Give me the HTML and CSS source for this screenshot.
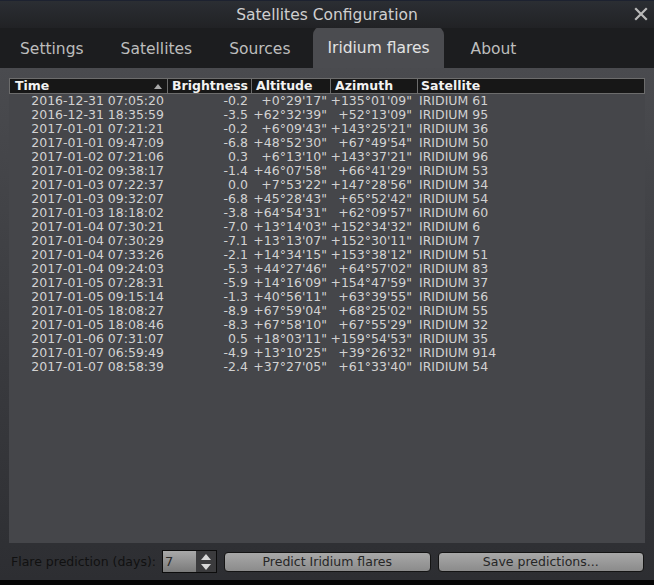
FILE: index.html
```html
<!DOCTYPE html>
<html>
<head>
<meta charset="utf-8">
<link rel="stylesheet" href="styles.css">
</head>
<body>
<div class="window">
  <div class="titlebar">
    <span class="title">Satellites Configuration</span>
    <svg class="close" width="14" height="14" viewBox="0 0 14 14"><path d="M2 2 L12 12 M12 2 L2 12" stroke="#b9b9b9" stroke-width="2.2" stroke-linecap="square"/></svg>
  </div>
  <div class="tabs">
    <div class="tab">Settings</div>
    <div class="tab">Satellites</div>
    <div class="tab">Sources</div>
    <div class="tab active">Iridium flares</div>
    <div class="tab about">About</div>
  </div>
  <div class="page">
    <div class="table">
      <div class="head">
        <div class="hc time">Time<svg class="sort" width="8" height="5" viewBox="0 0 8 5"><path d="M0 5 L4 0 L8 5 Z" fill="#a8a8a8"/></svg></div>
        <div class="hc">Brightness</div>
        <div class="hc">Altitude</div>
        <div class="hc">Azimuth</div>
        <div class="hc last">Satellite</div>
      </div>
      <div class="rows">
        <div class="row"><span>2016-12-31 07:05:20</span><span>-0.2</span><span>+0°29'17"</span><span>+135°01'09"</span><span class="sat">IRIDIUM 61</span></div>
        <div class="row"><span>2016-12-31 18:35:59</span><span>-3.5</span><span>+62°32'39"</span><span>+52°13'09"</span><span class="sat">IRIDIUM 95</span></div>
        <div class="row"><span>2017-01-01 07:21:21</span><span>-0.2</span><span>+6°09'43"</span><span>+143°25'21"</span><span class="sat">IRIDIUM 36</span></div>
        <div class="row"><span>2017-01-01 09:47:09</span><span>-6.8</span><span>+48°52'30"</span><span>+67°49'54"</span><span class="sat">IRIDIUM 50</span></div>
        <div class="row"><span>2017-01-02 07:21:06</span><span>0.3</span><span>+6°13'10"</span><span>+143°37'21"</span><span class="sat">IRIDIUM 96</span></div>
        <div class="row"><span>2017-01-02 09:38:17</span><span>-1.4</span><span>+46°07'58"</span><span>+66°41'29"</span><span class="sat">IRIDIUM 53</span></div>
        <div class="row"><span>2017-01-03 07:22:37</span><span>0.0</span><span>+7°53'22"</span><span>+147°28'56"</span><span class="sat">IRIDIUM 34</span></div>
        <div class="row"><span>2017-01-03 09:32:07</span><span>-6.8</span><span>+45°28'43"</span><span>+65°52'42"</span><span class="sat">IRIDIUM 54</span></div>
        <div class="row"><span>2017-01-03 18:18:02</span><span>-3.8</span><span>+64°54'31"</span><span>+62°09'57"</span><span class="sat">IRIDIUM 60</span></div>
        <div class="row"><span>2017-01-04 07:30:21</span><span>-7.0</span><span>+13°14'03"</span><span>+152°34'32"</span><span class="sat">IRIDIUM 6</span></div>
        <div class="row"><span>2017-01-04 07:30:29</span><span>-7.1</span><span>+13°13'07"</span><span>+152°30'11"</span><span class="sat">IRIDIUM 7</span></div>
        <div class="row"><span>2017-01-04 07:33:26</span><span>-2.1</span><span>+14°34'15"</span><span>+153°38'12"</span><span class="sat">IRIDIUM 51</span></div>
        <div class="row"><span>2017-01-04 09:24:03</span><span>-5.3</span><span>+44°27'46"</span><span>+64°57'02"</span><span class="sat">IRIDIUM 83</span></div>
        <div class="row"><span>2017-01-05 07:28:31</span><span>-5.9</span><span>+14°16'09"</span><span>+154°47'59"</span><span class="sat">IRIDIUM 37</span></div>
        <div class="row"><span>2017-01-05 09:15:14</span><span>-1.3</span><span>+40°56'11"</span><span>+63°39'55"</span><span class="sat">IRIDIUM 56</span></div>
        <div class="row"><span>2017-01-05 18:08:27</span><span>-8.9</span><span>+67°59'04"</span><span>+68°25'02"</span><span class="sat">IRIDIUM 55</span></div>
        <div class="row"><span>2017-01-05 18:08:46</span><span>-8.3</span><span>+67°58'10"</span><span>+67°55'29"</span><span class="sat">IRIDIUM 32</span></div>
        <div class="row"><span>2017-01-06 07:31:07</span><span>0.5</span><span>+18°03'11"</span><span>+159°54'53"</span><span class="sat">IRIDIUM 35</span></div>
        <div class="row"><span>2017-01-07 06:59:49</span><span>-4.9</span><span>+13°10'25"</span><span>+39°26'32"</span><span class="sat">IRIDIUM 914</span></div>
        <div class="row"><span>2017-01-07 08:58:39</span><span>-2.4</span><span>+37°27'05"</span><span>+61°33'40"</span><span class="sat">IRIDIUM 54</span></div>
      </div>
    </div>
    <div class="controls">
      <span class="label">Flare prediction (days):</span>
      <div class="spin">
        <div class="spin-field">7</div>
        <div class="spin-btns">
          <svg width="10" height="6" viewBox="0 0 10 6"><path d="M0 6 L5 0 L10 6 Z" fill="#d8d8d8"/></svg>
          <svg width="10" height="6" viewBox="0 0 10 6"><path d="M0 0 L5 6 L10 0 Z" fill="#d8d8d8"/></svg>
        </div>
      </div>
      <div class="btn">Predict Iridium flares</div>
      <div class="btn">Save predictions...</div>
    </div>
  </div>
  <div class="bottom"></div>
</div>
</body>
</html>
```
FILE: styles.css
```css
* { box-sizing: border-box; }
html, body { margin: 0; padding: 0; background: #000; }
body { font-family: "DejaVu Sans", sans-serif; }
.window { width: 654px; height: 585px; display: flex; flex-direction: column; overflow: hidden; }
.titlebar {
  height: 28px; position: relative;
  background: linear-gradient(#2b2e33, #212225);
  border-top: 1px solid #1d2230;
  display: flex; align-items: center; justify-content: center;
}
.title { color: #cfcfcf; font-size: 15.5px; }
.close { position: absolute; right: 6px; top: 6px; }
.tabs {
  height: 40px; background: #1c1d1f;
  display: flex; align-items: flex-end; padding-left: 6px; gap: 9px;
}
.tab {
  height: 40px; padding: 0 14px; display: flex; align-items: center;
  color: #bdbdbd; font-size: 15.5px; padding-top: 2px;
}
.tab.active {
  height: 42px; background: #4b4c50; border-radius: 9px 9px 0 0; color: #e2e2e2;
}
.tab.about { margin-left: 4px; }
.page {
  flex: 1; display: flex; flex-direction: column;
  background: linear-gradient(#4a4b4f, #2d2e32);
  padding: 10px 9px 0;
}
.table { height: 465px; background: #45464a; display: flex; flex-direction: column; }
.head {
  display: grid; grid-template-columns: 158px 84px 79px 87px 1fr;
  height: 16px; background: #171717; border: 1px solid #6c6c6c;
}
.hc {
  color: #f2f2f2; font-weight: bold; font-size: 12.5px; line-height: 14px;
  padding-left: 4px; border-right: 1px solid #6c6c6c; position: relative;
}
.hc.last { border-right: none; padding-left: 3px; }
.hc.time { padding-left: 5px; }
.sort { position: absolute; right: 5px; top: 5px; }
.rows { display: flex; flex-direction: column; }
.row {
  display: grid; grid-template-columns: 158px 84px 79px 87px 1fr;
  height: 14px; color: #d2d2d2; font-size: 12.5px; line-height: 14px; white-space: nowrap;
}
.row span { text-align: right; padding-right: 3px; }
.row span:nth-child(4) { padding-right: 5px; }
.row span.sat { text-align: left; padding-left: 2px; }
.controls { height: 37px; display: flex; align-items: center; gap: 7px; margin: 0 -9px 0 -8px; padding: 0 10px 0 10px; }
.label { color: #111; font-size: 12.5px; margin-right: -1px; }
.spin {
  width: 55px; height: 23px; border: 1px solid #0c0c0c; display: flex; flex: none;
}
.spin-field {
  width: 33px; background: linear-gradient(#a9a9a9, #7a7a7a);
  color: #2a2a2a; font-size: 13px; line-height: 21px; padding-left: 2px;
}
.spin-btns {
  flex: 1; background: #3b3b3d; display: flex; flex-direction: column;
  align-items: center; justify-content: center; gap: 4px;
}
.btn {
  flex: 1; height: 20px; border: 1px solid #141414; border-radius: 4px;
  background: linear-gradient(#a8a8a8, #8b8b8b);
  color: #262626; font-size: 12.5px; line-height: 18px; text-align: center;
}
.bottom { height: 5px; background: #050505; }
```
